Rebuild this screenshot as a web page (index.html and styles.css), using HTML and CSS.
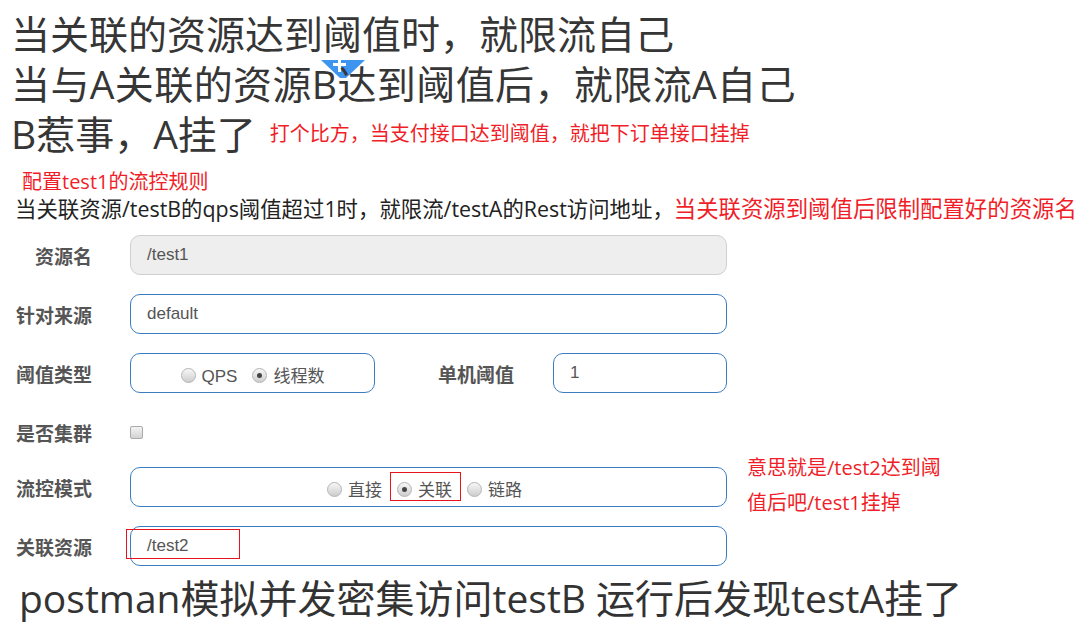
FILE: index.html
```html
<!DOCTYPE html>
<html lang="zh-CN">
<head>
<meta charset="utf-8">
<title>关联流控</title>
<link rel="stylesheet" href="styles.css">
</head>
<body>
<div class="page">
  <div class="headlines">
    <svg class="blue-tab" width="44" height="19" viewBox="0 0 44 19">
      <polygon points="0,0 44,0 25,18 19,18" fill="#3d95ef"/>
      <rect x="17" y="0" width="3" height="12" fill="#fff"/>
      <rect x="12" y="3" width="13" height="3" fill="#fff"/>
    </svg>
    <div class="headline">当关联的资源达到阈值时，就限流自己</div>
    <div class="headline wide">当与A关联的资源B达到阈值后，就限流A自己</div>
    <div class="headline">B惹事，A挂了<span class="note-inline">打个比方，当支付接口达到阈值，就把下订单接口挂掉</span></div>
  </div>

  <div class="cfg-title">配置test1的流控规则</div>
  <div class="desc">当关联资源/testB的qps阈值超过1时，就限流/testA的Rest访问地址，<span class="red">当关联资源到阈值后限制配置好的资源名</span></div>

  <div class="rule-form">
    <div class="row">
      <div class="lbl">资源名</div>
      <div class="field disabled">/test1</div>
    </div>
    <div class="row">
      <div class="lbl">针对来源</div>
      <div class="field">default</div>
    </div>
    <div class="row">
      <div class="lbl">阈值类型</div>
      <div class="ctrl-line">
        <div class="field radios grade">
          <span class="opt"><span class="radio"></span><span class="opt-text">QPS</span></span>
          <span class="opt"><span class="radio checked"></span><span class="opt-text">线程数</span></span>
        </div>
        <div class="lbl inline-lbl">单机阈值</div>
        <div class="field count">1</div>
      </div>
    </div>
    <div class="row row-check">
      <div class="lbl">是否集群</div>
      <div class="check-wrap"><span class="checkbox"></span></div>
    </div>
    <div class="row">
      <div class="lbl">流控模式</div>
      <div class="field radios mode">
        <span class="opt"><span class="radio"></span><span class="opt-text">直接</span></span>
        <span class="opt"><span class="radio checked"></span><span class="opt-text">关联</span></span>
        <span class="opt"><span class="radio"></span><span class="opt-text">链路</span></span>
        <span class="mark mark-mode"></span>
      </div>
      <div class="side-note">意思就是/test2达到阈<br>值后吧/test1挂掉</div>
    </div>
    <div class="row">
      <div class="lbl">关联资源</div>
      <div class="field ref">/test2<span class="mark mark-ref"></span></div>
    </div>
  </div>

  <div class="footer-line">postman模拟并发密集访问testB 运行后发现testA挂了</div>
</div>
</body>
</html>
```
FILE: styles.css
```css
* { box-sizing: border-box; }
html, body { margin: 0; padding: 0; background: #fff; }
body {
  width: 1080px;
  height: 626px;
  overflow: hidden;
  font-family: "Open Sans", "Noto Sans CJK SC", sans-serif;
  color: #333;
}

.headlines {
  position: relative;
  padding-top: 9px;
  padding-left: 11px;
}
.blue-tab {
  position: absolute;
  left: 321px;
  top: 60px;
}
.headline {
  position: relative;
  font-size: 39px;
  line-height: 50px;
  color: #363636;
  white-space: nowrap;
}
.headline.wide { letter-spacing: 0.4px; }
.note-inline {
  font-size: 20px;
  line-height: 1;
  letter-spacing: 0;
  color: #f01e28;
  margin-left: 14px;
  vertical-align: 8px;
}

.cfg-title {
  margin-top: 10px;
  padding-left: 22px;
  font-size: 20px;
  line-height: 26px;
  color: #f01e28;
}
.desc {
  padding-left: 15px;
  font-size: 21.4px;
  line-height: 28px;
  color: #222;
  white-space: nowrap;
}
.desc .red {
  font-size: 22.4px;
  line-height: 1;
}
.red { color: #f01e28; }

.rule-form {
  margin-top: 12px;
  display: flex;
  flex-direction: column;
  gap: 19px;
}
.row {
  position: relative;
  display: grid;
  grid-template-columns: 92px 597px;
  column-gap: 38px;
  height: 40px;
}
.row-check { height: 36px; }

.lbl {
  font-family: "Noto Sans CJK SC", sans-serif;
  font-weight: 700;
  font-size: 19px;
  line-height: 38px;
  padding-top: 2px;
  color: #555;
  text-align: right;
  white-space: nowrap;
}

.field {
  position: relative;
  height: 40px;
  border: 1px solid #3c7dbf;
  border-radius: 10px;
  padding: 0 16px;
  font-family: "Liberation Sans", "Noto Sans CJK SC", sans-serif;
  font-size: 17px;
  line-height: 38px;
  color: #555;
  background: #fff;
}
.field.disabled {
  background: #eeeeee;
  border-color: #cfcfcf;
}

.ctrl-line {
  display: flex;
  align-items: flex-start;
}
.field.grade { width: 245px; }
.inline-lbl {
  width: 78px;
  margin-left: 63px;
  text-align: left;
}
.field.count {
  width: 174px;
  margin-left: 37px;
}

.radios {
  display: flex;
  align-items: center;
  justify-content: center;
  gap: 15px;
  padding: 4px 0 0 0;
}
.field.mode { padding-left: 0; padding-right: 8px; }
.opt {
  display: inline-flex;
  align-items: center;
  gap: 6px;
}
.radio {
  width: 15px;
  height: 15px;
  border-radius: 50%;
  border: 1px solid #b4b4b4;
  background: linear-gradient(#f7f7f7, #cdcdcd);
  display: inline-flex;
  align-items: center;
  justify-content: center;
  flex: none;
}
.radio.checked::after {
  content: "";
  width: 5px;
  height: 5px;
  border-radius: 50%;
  background: #444;
}
.opt-text {
  font-size: 17px;
  line-height: 20px;
  padding-top: 3px;
  color: #555;
}

.check-wrap {
  padding-top: 14px;
}
.checkbox {
  display: block;
  width: 13px;
  height: 13px;
  border: 1px solid #aaa;
  border-radius: 2px;
  background: linear-gradient(#f4f4f4, #d2d2d2);
}

.mark {
  position: absolute;
  border: 1px solid #e8141d;
  pointer-events: none;
}
.mark-mode {
  left: 259px;
  top: 4px;
  width: 71px;
  height: 29px;
}
.mark-ref {
  left: -5px;
  top: 2px;
  width: 114px;
  height: 30px;
}

.side-note {
  position: absolute;
  left: 747px;
  top: -17px;
  font-size: 20px;
  line-height: 35px;
  color: #f01e28;
  white-space: nowrap;
}

.footer-line {
  margin-top: 7px;
  padding-left: 19px;
  font-size: 39px;
  line-height: 50px;
  color: #333;
  white-space: nowrap;
}
```
